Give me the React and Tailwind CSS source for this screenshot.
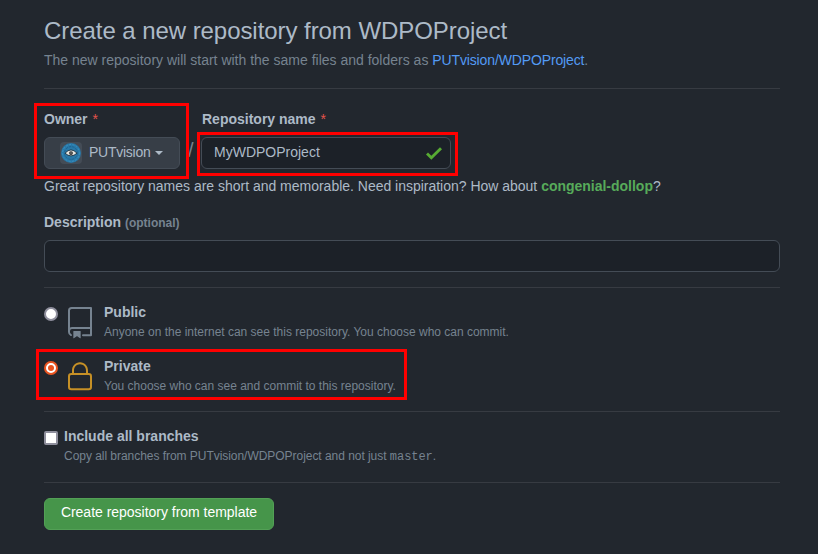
import React from "react";

function Rule({ className = "" }) {
  return <div className={`h-px bg-[#373b42] ${className}`} />;
}

function RepoIcon() {
  return (
    <svg width="32" height="32" viewBox="0 0 24 24" fill="#768390">
      <path fillRule="evenodd" d="M3 2.75A2.75 2.75 0 015.75 0h14.5a.75.75 0 01.75.75v20.5a.75.75 0 01-.75.75h-6a.75.75 0 010-1.5h5.25v-4H6A1.5 1.5 0 004.5 18v.75c0 .716.43 1.334 1.05 1.605a.75.75 0 01-.6 1.374A3.25 3.25 0 013 18.75v-16zM19.5 1.5V15H6c-.546 0-1.059.146-1.5.401V2.75c0-.69.56-1.25 1.25-1.25H19.5z" />
      <path d="M7 18.25a.25.25 0 01.25-.25h5a.25.25 0 01.25.25v5.01a.25.25 0 01-.397.201l-2.206-1.604a.25.25 0 00-.294 0L7.397 23.46a.25.25 0 01-.397-.2v-5.01z" />
    </svg>
  );
}

function LockIcon() {
  return (
    <svg width="32" height="32" viewBox="0 0 24 24" fill="#c69026">
      <path fillRule="evenodd" d="M6 9V7.25C6 3.845 8.503 1 12 1s6 2.845 6 6.25V9h.5a2.5 2.5 0 012.5 2.5v8a2.5 2.5 0 01-2.5 2.5h-13A2.5 2.5 0 013 19.5v-8A2.5 2.5 0 015.5 9H6zm1.5-1.75C7.5 4.58 9.422 2.5 12 2.5c2.578 0 4.5 2.08 4.5 4.75V9h-9V7.25zm-3 4.25a1 1 0 011-1h13a1 1 0 011 1v8a1 1 0 01-1 1h-13a1 1 0 01-1-1v-8z" />
    </svg>
  );
}

function Avatar() {
  return (
    <svg width="22" height="22" viewBox="0 0 22 22">
      <rect width="22" height="22" rx="4" fill="#444c56" />
      <circle cx="11" cy="11" r="10" fill="#2878a8" />
      <circle cx="11" cy="11" r="8.4" fill="none" stroke="#3c92c0" strokeWidth="1" strokeDasharray="2 1.4" />
      <circle cx="11" cy="11" r="6.4" fill="none" stroke="#1f6390" strokeWidth="1" strokeDasharray="2.4 1" />
      <path d="M5 11.2Q11 4.6 17 11.2Q11 16.6 5 11.2z" fill="#e6e4df" stroke="#1b3444" strokeWidth="0.9" />
      <circle cx="11" cy="11.1" r="1.9" fill="#2b2b2b" />
      <circle cx="11" cy="11" r="0.8" fill="#8b8f90" />
    </svg>
  );
}

function Option({ checked, icon, title, note }) {
  return (
    <div className="flex h-[54px]">
      <span
        className={
          checked
            ? "mt-[5px] flex size-3.5 items-center justify-center rounded-full border-[2px] border-[#e95420] bg-white"
            : "mt-[5px] size-3.5 rounded-full border-[2px] border-[#8f8f9d] bg-white"
        }
      >
        {checked && <span className="size-1.5 rounded-full bg-[#e95420]" />}
      </span>
      <span className="mt-[5px] ml-1.5">{icon}</span>
      <div className="ml-2">
        <div className="text-sm leading-[21px] font-bold whitespace-nowrap">{title}</div>
        <div className="text-xs leading-[18px] tracking-[-0.006px] whitespace-nowrap text-[#768390]">{note}</div>
      </div>
    </div>
  );
}

export default function App() {
  return (
    <div className="relative h-[554px] w-[818px] overflow-hidden bg-[#22272e] pt-[13px] pr-[38px] pl-11 font-['Liberation_Sans',Arial,sans-serif] text-sm text-[#adbac7]">
      <h1 className="text-2xl leading-9 tracking-[-0.06px] whitespace-nowrap">Create a new repository from WDPOProject</h1>
      <p className="mt-px leading-[21px] whitespace-nowrap text-[#768390]">
        The new repository will start with the same files and folders as <a className="tracking-[-0.13px] text-[#539bf5]">PUTvision/WDPOProject</a>.
      </p>
      <Rule className="mt-[17px]" />

      <div className="mt-5 flex">
        <div className="w-[136px]">
          <div className="leading-[21px] font-bold">
            Owner <span className="ml-px font-normal text-[#e5534b]">*</span>
          </div>
          <button className="mt-[7px] flex h-8 w-[136px] items-center rounded-md border border-[#444c56] bg-[#373e47] pl-[15px]">
            <Avatar />
            <span className="ml-[7px] pb-0.5 leading-5 tracking-[-0.25px]">PUTvision</span>
            <span className="ml-1 border-x-4 border-t-4 border-x-transparent border-t-[#adbac7]" />
          </button>
        </div>
        <div className="mt-[29px] w-[21px] pl-2 text-xl leading-6 text-[#768390]">/</div>
        <div className="w-[250px]">
          <div className="pl-px leading-[21px] font-bold">
            Repository name <span className="ml-px font-normal text-[#e5534b]">*</span>
          </div>
          <div className="mt-[7px] flex h-8 items-center justify-between rounded-md border border-[#444c56] bg-[#1c2128] pr-2 pl-3">
            <span className="pb-0.5 leading-5">MyWDPOProject</span>
            <svg width="16" height="13" viewBox="0 0 12 9.5" fill="#57ab33">
              <path d="M12 1.5l-8 8-4-4L1.5 4 4 6.5 10.5 0z" />
            </svg>
          </div>
        </div>
      </div>

      <p className="mt-[7px] leading-[21px] tracking-[-0.012px] whitespace-nowrap">
        Great repository names are short and memorable. Need inspiration? How about <b className="text-[#57ab5a]">congenial-dollop</b>?
      </p>

      <div className="mt-[15px] leading-[21px] font-bold">
        Description <span className="text-xs text-[#768390]">(optional)</span>
      </div>
      <div className="mt-[7px] h-8 rounded-md border border-[#444c56] bg-[#1c2128]" />
      <Rule className="mt-[15px]" />

      <div className="mt-[14px]">
        <Option icon={<RepoIcon />} title="Public" note="Anyone on the internet can see this repository. You choose who can commit." />
        <Option checked icon={<LockIcon />} title="Private" note="You choose who can see and commit to this repository." />
      </div>
      <Rule className="mt-px" />

      <div className="mt-[14px] flex h-14">
        <span className="mt-[5px] size-3.5 rounded-xs border-[2px] border-[#8f8f9d] bg-white" />
        <div className="ml-1.5">
          <div className="leading-[21px] font-bold">Include all branches</div>
          <div className="text-xs leading-[18px] tracking-[-0.04px] whitespace-nowrap text-[#768390]">
            Copy all branches from PUTvision/WDPOProject and not just <code className="font-['Liberation_Mono',monospace]">master</code>.
          </div>
        </div>
      </div>
      <Rule />
      <button className="mt-[15px] h-8 w-[230px] rounded-md border border-[#53a056] bg-[#46954a] pb-1 leading-5 tracking-[-0.02px] whitespace-nowrap text-white">
        Create repository from template
      </button>

      <div className="absolute top-[103px] left-[34px] h-[76px] w-[155px] border-[3px] border-[#ff0000]" />
      <div className="absolute top-[132px] left-[197px] h-11 w-[261px] border-[3px] border-[#ff0000]" />
      <div className="absolute top-[349px] left-9 h-[51px] w-[371px] border-[3px] border-[#ff0000]" />
    </div>
  );
}
